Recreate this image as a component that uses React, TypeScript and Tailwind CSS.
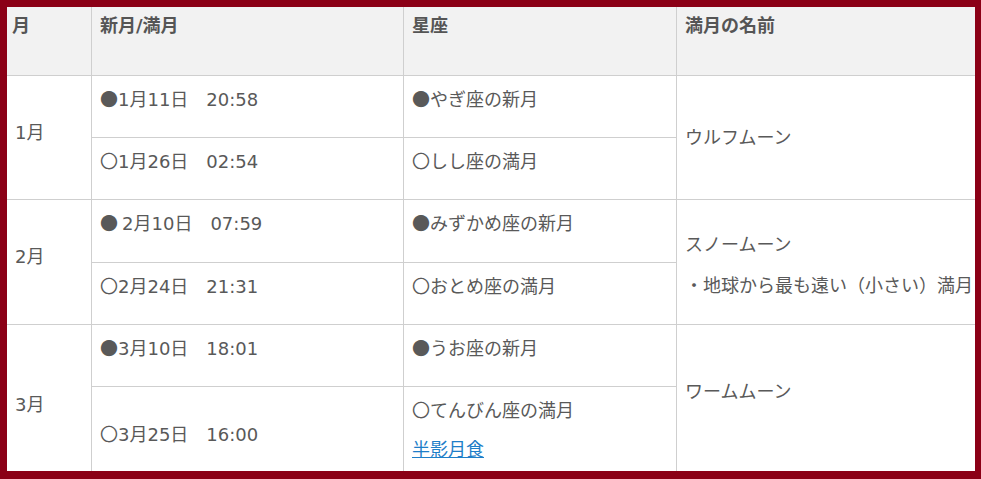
const font = { fontFamily: '"Noto Sans CJK JP", "Noto Sans", sans-serif' };

const cell = 'bg-white pl-2 text-[18px] leading-6 text-[#595959]';
const head = 'bg-[#f2f2f2] pl-2 pt-[5px] text-[18px] leading-6 font-bold text-[#555]';

// digits in the original font are wide (Verdana-like), so give them DejaVu
function T({ s }: { s: string }) {
  return (
    <>
      {s.split(/([0-9:/]+)/).map((part, i) =>
        /^[0-9:/]+$/.test(part) ? (
          <span key={i} style={{ fontFamily: '"DejaVu Sans", sans-serif' }}>{part}</span>
        ) : (
          <span key={i}>{part}</span>
        )
      )}
    </>
  );
}

export default function App() {
  return (
    <div className="w-[981px] h-[479px] bg-[#8b0016] pt-[7px] pl-[7px]" style={font}>
      <div className="w-[968px] h-[464px] overflow-hidden">
        <div className="grid grid-cols-[84px_311px_272px_298px] grid-rows-[68px_61px_61px_62px_61px_61px_110px] gap-px bg-[#cfcfcf]">
          <div className={`${head} pl-[5px]`}>月</div>
          <div className={head}><T s="新月/満月" /></div>
          <div className={head}>星座</div>
          <div className={head}>満月の名前</div>

          <div className={`${cell} row-span-2 pt-[43px]`}><T s="1月" /></div>
          <div className={`${cell} pt-[10px]`}><T s="●1月11日　20:58" /></div>
          <div className={`${cell} pt-[10px]`}>●やぎ座の新月</div>
          <div className={`${cell} row-span-2 pt-[48px]`}>ウルフムーン</div>
          <div className={`${cell} pt-[10px]`}><T s="〇1月26日　02:54" /></div>
          <div className={`${cell} pt-[10px]`}>〇しし座の満月</div>

          <div className={`${cell} row-span-2 pt-[43px]`}><T s="2月" /></div>
          <div className={`${cell} pt-[10px]`}><T s="● 2月10日　07:59" /></div>
          <div className={`${cell} pt-[10px]`}>●みずかめ座の新月</div>
          <div className={`${cell} row-span-2 pt-[31px]`}>
            <p>スノームーン</p>
            <p className="mt-[17px] whitespace-nowrap">・地球から最も遠い（小さい）満月</p>
          </div>
          <div className={`${cell} pt-[10px]`}><T s="〇2月24日　21:31" /></div>
          <div className={`${cell} pt-[10px]`}>〇おとめ座の満月</div>

          <div className={`${cell} row-span-2 pt-[66px]`}><T s="3月" /></div>
          <div className={`${cell} pt-[10px]`}><T s="●3月10日　18:01" /></div>
          <div className={`${cell} pt-[10px]`}>●うお座の新月</div>
          <div className={`${cell} row-span-2 pt-[53px]`}>ワームムーン</div>
          <div className={`${cell} pt-[34px]`}><T s="〇3月25日　16:00" /></div>
          <div className={`${cell} pt-[10px]`}>
            <p>〇てんびん座の満月</p>
            <p className="mt-[15px]">
              <a href="#" className="text-[#1e7ec8] underline">半影月食</a>
            </p>
          </div>
        </div>
      </div>
    </div>
  );
}
